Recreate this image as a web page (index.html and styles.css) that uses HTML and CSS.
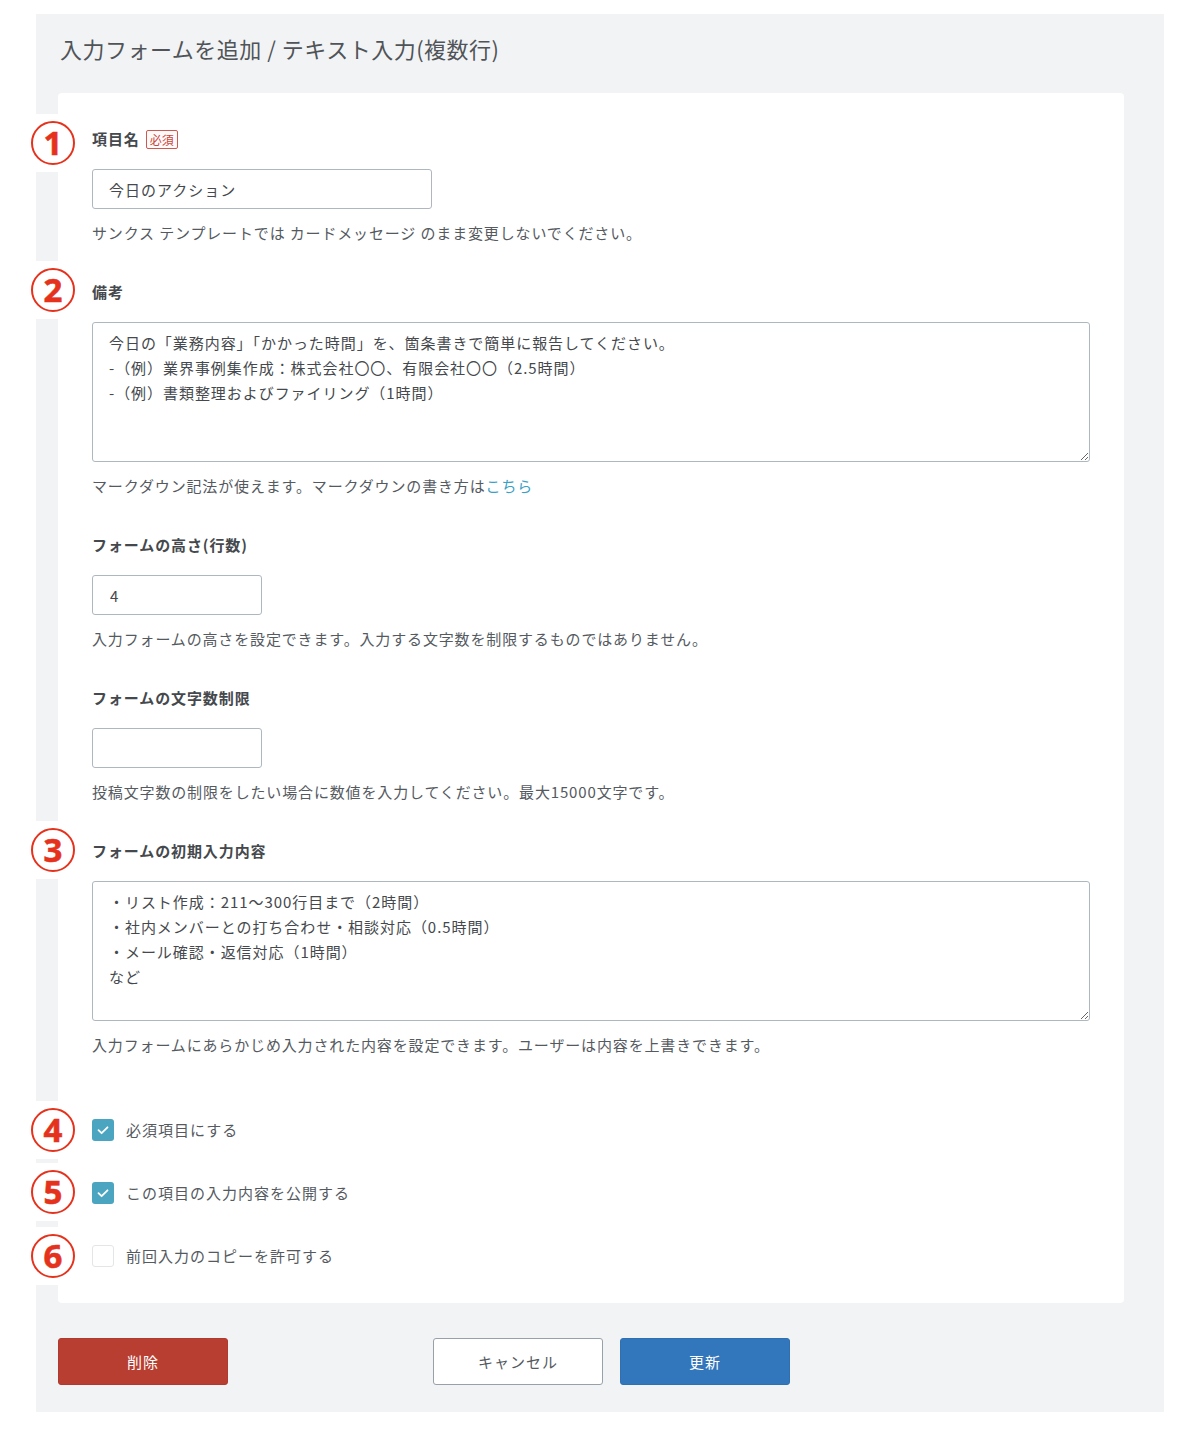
FILE: index.html
```html
<!DOCTYPE html>
<html lang="ja">
<head>
<meta charset="utf-8">
<title>入力フォームを追加</title>
<link rel="stylesheet" href="styles.css">
</head>
<body>
<div class="page">
  <div class="panel">
    <h1 class="title">入力フォームを追加 / テキスト入力(複数行)</h1>
    <div class="card">
      <div class="field">
        <div class="label">項目名<span class="badge">必須</span></div>
        <input class="input input-wide" type="text" value="今日のアクション" readonly>
        <p class="help">サンクス テンプレートでは カードメッセージ のまま変更しないでください。</p>
      </div>
      <div class="field">
        <div class="label">備考</div>
        <textarea class="textarea" readonly>今日の「業務内容」「かかった時間」を、箇条書きで簡単に報告してください。
-（例）業界事例集作成：株式会社〇〇、有限会社〇〇（2.5時間）
-（例）書類整理およびファイリング（1時間）</textarea>
        <p class="help">マークダウン記法が使えます。マークダウンの書き方は<a class="link" href="#">こちら</a></p>
      </div>
      <div class="field">
        <div class="label">フォームの高さ(行数)</div>
        <input class="input input-short" type="text" value="4" readonly>
        <p class="help">入力フォームの高さを設定できます。入力する文字数を制限するものではありません。</p>
      </div>
      <div class="field">
        <div class="label">フォームの文字数制限</div>
        <input class="input input-short" type="text" value="" readonly>
        <p class="help">投稿文字数の制限をしたい場合に数値を入力してください。最大15000文字です。</p>
      </div>
      <div class="field">
        <div class="label">フォームの初期入力内容</div>
        <textarea class="textarea" readonly>・リスト作成：211〜300行目まで（2時間）
・社内メンバーとの打ち合わせ・相談対応（0.5時間）
・メール確認・返信対応（1時間）
など</textarea>
        <p class="help">入力フォームにあらかじめ入力された内容を設定できます。ユーザーは内容を上書きできます。</p>
      </div>
      <div class="checks">
        <div class="check">
          <span class="box box-on"><svg width="22" height="22" viewBox="0 0 22 22"><polyline points="6.5,11.2 9.6,14.2 15.5,8.3" fill="none" stroke="#fff" stroke-width="1.8" stroke-linecap="round" stroke-linejoin="round"/></svg></span>
          <span class="check-label">必須項目にする</span>
        </div>
        <div class="check">
          <span class="box box-on"><svg width="22" height="22" viewBox="0 0 22 22"><polyline points="6.5,11.2 9.6,14.2 15.5,8.3" fill="none" stroke="#fff" stroke-width="1.8" stroke-linecap="round" stroke-linejoin="round"/></svg></span>
          <span class="check-label">この項目の入力内容を公開する</span>
        </div>
        <div class="check">
          <span class="box box-off"></span>
          <span class="check-label">前回入力のコピーを許可する</span>
        </div>
      </div>
    </div>
    <div class="actions">
      <button class="btn btn-delete" type="button">削除</button>
      <button class="btn btn-cancel" type="button">キャンセル</button>
      <button class="btn btn-update" type="button">更新</button>
    </div>
  </div>

  <div class="note note-1"><span class="circle">1</span></div>
  <div class="note note-2"><span class="circle">2</span></div>
  <div class="note note-3"><span class="circle">3</span></div>
  <div class="note note-4"><span class="circle">4</span></div>
  <div class="note note-5"><span class="circle">5</span></div>
  <div class="note note-6"><span class="circle">6</span></div>
</div>
</body>
</html>
```
FILE: styles.css
```css
html, body {
  margin: 0;
  padding: 0;
  background: #ffffff;
}

body {
  font-family: "Noto Sans CJK JP", "Noto Sans", sans-serif;
  color: #555a5f;
  font-size: 15px;
}

.page {
  position: relative;
  width: 1188px;
  min-height: 1436px;
  padding-top: 14px;
  box-sizing: border-box;
}

.panel {
  margin-left: 36px;
  width: 1128px;
  box-sizing: border-box;
  background: #f2f3f5;
  padding: 0 40px 27px 22px;
}

.title {
  margin: 0;
  padding: 19px 0 30px 2px;
  font-size: 22px;
  line-height: 30px;
  font-weight: 400;
  letter-spacing: 0.5px;
  color: #505458;
}

.card {
  background: #ffffff;
  border-radius: 4px;
  padding: 35px 34px 36px 34px;
}

.field + .field {
  margin-top: 37px;
}

.label {
  font-weight: 700;
  line-height: 22px;
  letter-spacing: 0.9px;
  color: #45494d;
  margin-bottom: 19px;
  display: flex;
  align-items: center;
}

.badge {
  display: inline-block;
  margin-left: 6px;
  height: 19px;
  line-height: 17px;
  box-sizing: border-box;
  padding: 0 3px;
  border: 1px solid #cc5a50;
  border-radius: 2px;
  color: #c9473c;
  font-size: 12px;
  font-weight: 400;
  letter-spacing: 0;
  background: #fffafa;
}

.input {
  display: block;
  box-sizing: border-box;
  height: 40px;
  border: 1px solid #aeb7c0;
  border-radius: 3px;
  padding: 0 16px;
  font-family: "Noto Sans CJK JP", "Noto Sans", sans-serif;
  font-size: 15px;
  letter-spacing: 1px;
  color: #45494d;
  background: #fff;
  outline: none;
}

.input-wide {
  width: 340px;
}

.input-short {
  width: 170px;
  padding-left: 17px;
}

.textarea {
  display: block;
  box-sizing: border-box;
  width: 100%;
  height: 140px;
  border: 1px solid #aeb7c0;
  border-radius: 3px;
  padding: 7px 16px;
  font-family: "Noto Sans CJK JP", "Noto Sans", sans-serif;
  font-size: 15px;
  line-height: 25px;
  letter-spacing: 0.95px;
  color: #45494d;
  background: #fff;
  outline: none;
  resize: vertical;
  overflow: hidden;
}

.help {
  margin: 13px 0 0 0;
  line-height: 22px;
  letter-spacing: 0.85px;
  color: #555a5f;
}

.link {
  color: #3aa0c6;
  text-decoration: none;
}

.checks {
  margin-top: 63px;
  display: flex;
  flex-direction: column;
  gap: 41px;
}

.check {
  display: flex;
  align-items: center;
  height: 22px;
}

.box {
  width: 22px;
  height: 22px;
  box-sizing: border-box;
  border-radius: 3px;
  display: inline-flex;
}

.box-on {
  background: #4ba5c0;
}

.box-off {
  background: #fff;
  border: 1px solid #e3e6e9;
}

.check-label {
  margin-left: 12px;
  line-height: 22px;
  letter-spacing: 1px;
  color: #555a5f;
}

.actions {
  display: flex;
  margin-top: 35px;
}

.btn {
  width: 170px;
  height: 47px;
  box-sizing: border-box;
  border-radius: 3px;
  font-family: "Noto Sans CJK JP", "Noto Sans", sans-serif;
  font-size: 15px;
  letter-spacing: 1px;
  cursor: pointer;
}

.btn-delete {
  background: #b83e31;
  border: 1px solid #b03a2d;
  color: #ffffff;
}

.btn-cancel {
  margin-left: 205px;
  background: #ffffff;
  border: 1px solid #98a1aa;
  color: #555a5f;
}

.btn-update {
  margin-left: 17px;
  background: #3276bc;
  border: 1px solid #2f70b3;
  color: #ffffff;
}

/* annotation markers overlaid on the left margin */
.note {
  position: absolute;
  left: 25px;
  width: 56px;
  height: 58px;
  background: #ffffff;
  display: flex;
  align-items: center;
  justify-content: center;
}

.circle {
  width: 44px;
  height: 44px;
  box-sizing: border-box;
  border: 2px solid #e5321d;
  border-radius: 50%;
  display: flex;
  align-items: center;
  justify-content: center;
  font-family: "Noto Sans", "Liberation Sans", sans-serif;
  font-weight: 700;
  font-size: 33px;
  line-height: 1;
  color: #e5321d;
  padding-bottom: 1px;
  -webkit-text-stroke: 0.6px #e5321d;
}

.note-1 { top: 114px; }
.note-2 { top: 261px; }
.note-3 { top: 821px; }
.note-4 { top: 1101px; }
.note-5 { top: 1163px; }
.note-6 { top: 1227px; }
```
